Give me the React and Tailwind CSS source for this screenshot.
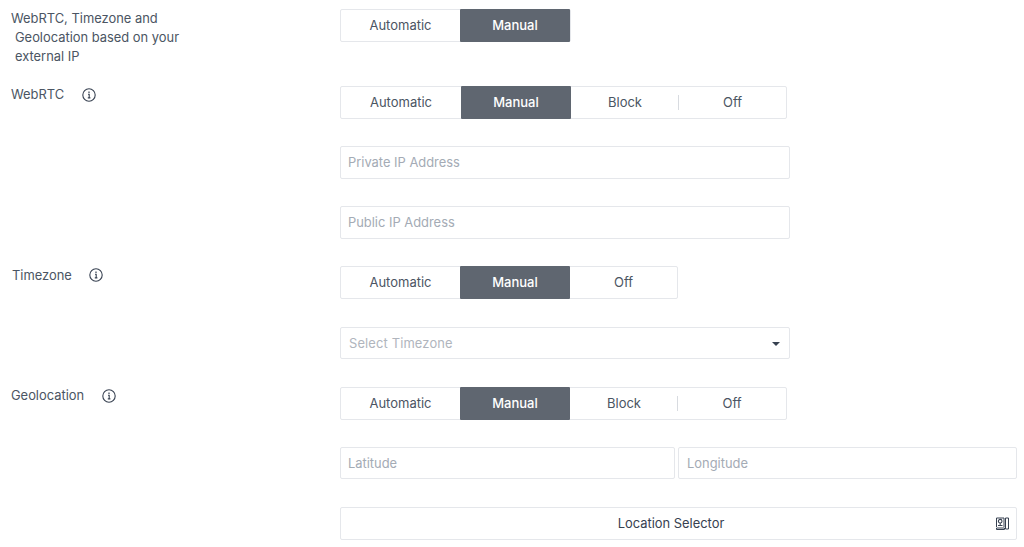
const FONT = "font-['Inter',sans-serif]"

function InfoIcon() {
  return (
    <svg width="14" height="14" viewBox="0 0 14 14" fill="none" stroke="#374151">
      <circle cx="7" cy="7" r="6.2" strokeWidth="1.1" />
      <path d="M6 6.2h1.2v3.6M5.8 9.9h2.6" strokeWidth="1.1" />
      <path d="M6.4 4.2h1.2" strokeWidth="1.4" />
    </svg>
  )
}

function MapIcon() {
  return (
    <svg width="13" height="14" viewBox="0 0 13 14" fill="none" stroke="#374151">
      <path d="M.5 10V1h7.5v9M9.5 1h3v11h-3z" strokeWidth="1" />
      <circle cx="4.2" cy="4.2" r="1.8" strokeWidth="1.1" />
      <path d="M4.2 6v3M2 8.5h4.5M.5 11h8v1.5h-8z" strokeWidth="1" />
    </svg>
  )
}

function Toggle({ options, widths }) {
  return (
    <div className="flex h-[33px] w-fit border border-[#e5e7eb] rounded-[2px] bg-white">
      {options.map((option, i) => (
        <div key={option} className="flex items-center" style={{ width: widths[i] }}>
          {i === 3 && <span className="h-[15px] w-px bg-[#d8dbe0] -ml-px" />}
          <span
            className={`flex-1 h-[33px] -my-px flex items-center justify-center text-[13px] ${
              option === 'Manual' ? 'bg-[#5f6670] text-white font-medium rounded-[1px]' : 'text-[#4b5563]'
            }`}
          >
            {option}
          </span>
        </div>
      ))}
    </div>
  )
}

function Field({ placeholder, arrow, className = '' }) {
  return (
    <div className={`border border-[#e5e7eb] rounded-[2px] pl-[7px] flex items-center justify-between text-[12.9px] text-[#a4abb5] ${className}`}>
      <span>{placeholder}</span>
      {arrow && <span className="w-0 h-0 border-x-[4px] border-x-transparent border-t-[4px] border-t-[#374151]" />}
    </div>
  )
}

function Label({ text, gap, iconClass = '', className = '' }) {
  return (
    <div className={`flex items-center h-[19px] -mt-px text-[12.9px] text-[#4b5563] ${className}`}>
      <span>{text}</span>
      <span className={`${gap} ${iconClass}`}><InfoIcon /></span>
    </div>
  )
}

export default function App() {
  return (
    <div className={`${FONT} bg-white h-[547px] w-[1024px] overflow-hidden pt-[9px] pr-[7px]`}>

      {/* External IP */}
      <div className="grid grid-cols-[340px_1fr] h-[77px]">
        <div className="pl-[11px] text-[12.9px] leading-[19px] text-[#4b5563]">
          <p>WebRTC, Timezone and</p>
          <p className="pl-[4px]">Geolocation based on your</p>
          <p className="pl-[4px]">external IP</p>
        </div>
        <Toggle options={['Automatic', 'Manual']} widths={[119, 110]} />
      </div>

      {/* WebRTC */}
      <div className="grid grid-cols-[340px_1fr] h-[180px]">
        <div className="pl-[11px]">
          <Label text="WebRTC" gap="ml-[18px]" />
        </div>
        <div className="flex flex-col">
          <Toggle options={['Automatic', 'Manual', 'Block', 'Off']} widths={[120, 110, 108, 107]} />
          <Field placeholder="Private IP Address" className="h-[33px] mt-[27px] w-[450px]" />
          <Field placeholder="Public IP Address" className="h-[33px] mt-[27px] w-[450px]" />
        </div>
      </div>

      {/* Timezone */}
      <div className="grid grid-cols-[340px_1fr] h-[121px]">
        <div className="pl-[12px]">
          <Label text="Timezone" gap="ml-[17px]" className="mt-0" iconClass="-mt-[2px]" />
        </div>
        <div className="flex flex-col">
          <Toggle options={['Automatic', 'Manual', 'Off']} widths={[119, 110, 107]} />
          <Field placeholder="Select Timezone" arrow className="h-[32px] mt-[28px] w-[450px] pl-[8px] pr-[9px] pt-[2px] tracking-[0.15px] text-[#b0b5bd]" />
        </div>
      </div>

      {/* Geolocation */}
      <div className="grid grid-cols-[340px_1fr]">
        <div className="pl-[11px]">
          <Label text="Geolocation" gap="ml-[18px]" />
        </div>
        <div className="flex flex-col">
          <Toggle options={['Automatic', 'Manual', 'Block', 'Off']} widths={[119, 110, 108, 108]} />
          <div className="mt-[27px] flex gap-[3px]">
            <Field placeholder="Latitude" className="h-[32px] w-[335px] pt-[2px]" />
            <Field placeholder="Longitude" className="h-[32px] flex-1 pl-[8px] pt-[2px]" />
          </div>
          <div className="mt-[28px] h-[33px] pl-[7px] pr-[7px] border border-[#e5e7eb] rounded-[2px] flex items-center text-[12.9px] text-[#374151]">
            <span className="flex-1 text-center">Location Selector</span>
            <span className="ml-[2px]"><MapIcon /></span>
          </div>
        </div>
      </div>

    </div>
  )
}
